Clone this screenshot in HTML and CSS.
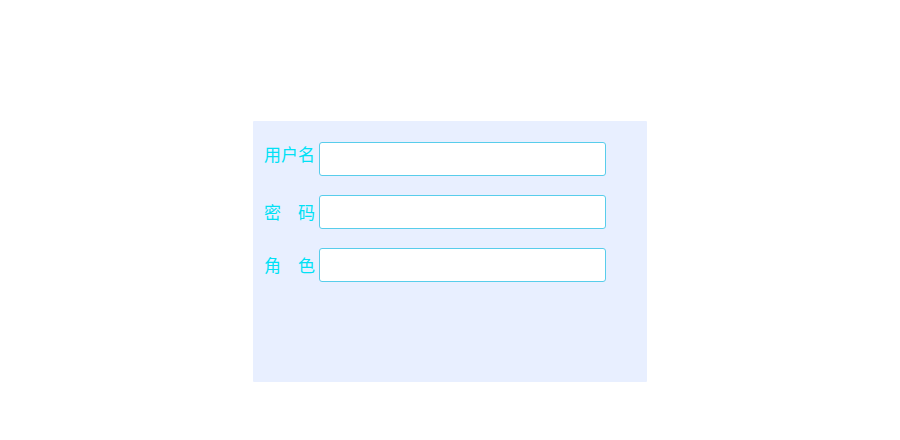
FILE: index.html
```html
<!DOCTYPE html>
<html lang="zh-CN">
<head>
<meta charset="utf-8">
<title>登录</title>
<link rel="stylesheet" href="styles.css">
</head>
<body>
<form class="login">
  <div class="field field-top">
    <label class="field-label" for="username">用户名</label>
    <input class="field-input" id="username" type="text">
  </div>
  <div class="field">
    <label class="field-label" for="password">密　码</label>
    <input class="field-input" id="password" type="password">
  </div>
  <div class="field">
    <label class="field-label" for="role">角　色</label>
    <input class="field-input" id="role" type="text">
  </div>
</form>
</body>
</html>
```
FILE: styles.css
```css
* {
  box-sizing: border-box;
}

body {
  margin: 0;
  padding: 121px 16px 58px;
  background: #fff;
  font-family: "Noto Sans CJK SC", sans-serif;
}

.login {
  display: flex;
  flex-direction: column;
  gap: 19px;
  max-width: 394px;
  margin: 0 auto;
  padding: 21px 41px 100px 11px;
  border-radius: 1px;
  background: #e8efff;
}

.field {
  display: flex;
  align-items: center;
  gap: 4px;
}

.field-top {
  align-items: flex-start;
}

.field-label {
  flex: none;
  color: #00e1f5;
  font-size: 17px;
  font-weight: 400;
  line-height: 24px;
  white-space: pre;
}

.field-input {
  flex: 1;
  min-width: 0;
  height: 34px;
  padding: 0 8px;
  border: 1px solid #58cdeb;
  border-radius: 3px;
  background: #fff;
  font: inherit;
}
```
